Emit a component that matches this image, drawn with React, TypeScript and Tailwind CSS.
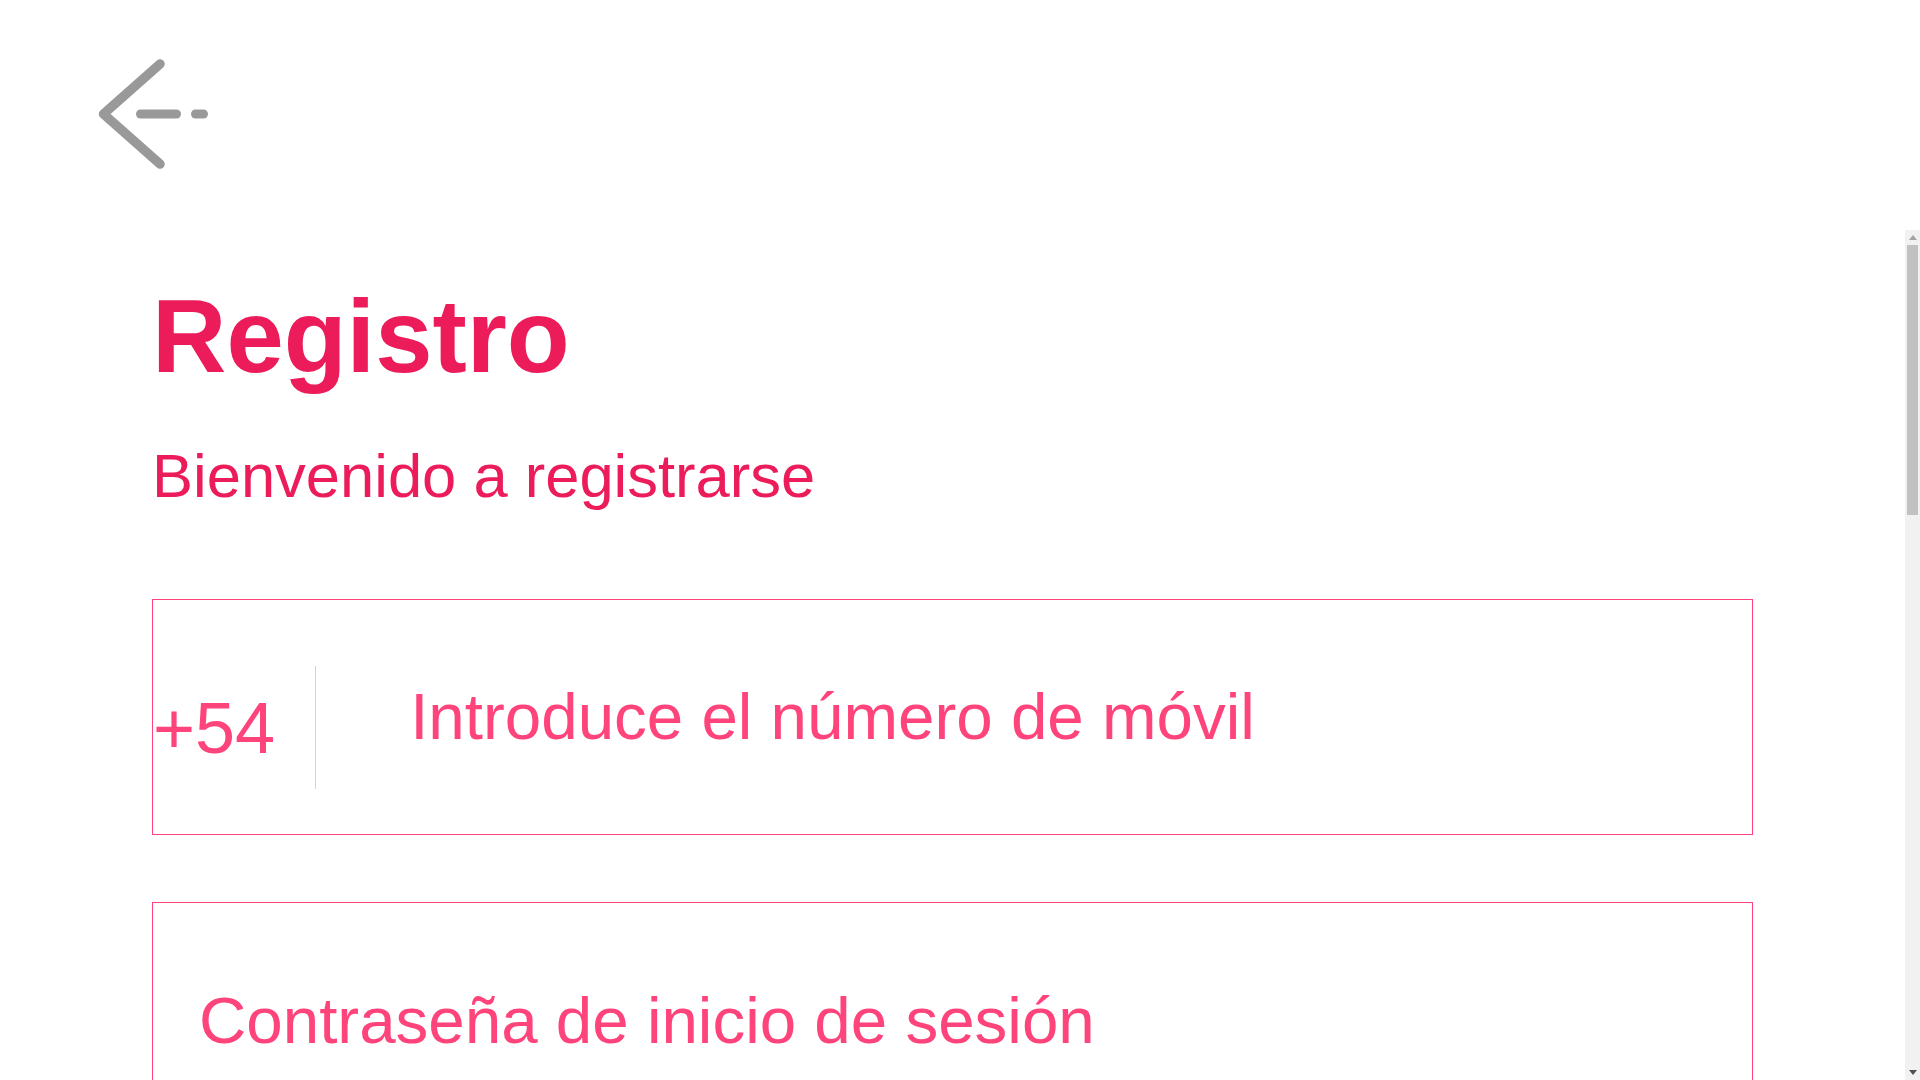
import React from "react";

export default function App() {
  return (
    <div
      className="h-screen w-full flex flex-col bg-white overflow-hidden"
      style={{ fontFamily: '"Liberation Sans", Arial, sans-serif' }}
    >
      <header className="h-[230px] shrink-0 pl-[90px] pt-[50px]">
        <button className="block w-[130px] h-[130px]" aria-label="Volver">
          <svg width="130" height="130" viewBox="0 0 130 130" fill="none">
            <polyline
              points="70,14 13.5,64 70,114"
              stroke="#999999"
              strokeWidth="9.5"
              strokeLinecap="round"
              strokeLinejoin="round"
            />
            <line x1="50.5" y1="64" x2="86.5" y2="64" stroke="#999999" strokeWidth="9" strokeLinecap="round" />
            <line x1="105.5" y1="64" x2="113.5" y2="64" stroke="#999999" strokeWidth="9" strokeLinecap="round" />
          </svg>
        </button>
      </header>
      <div className="flex-1 min-h-0 flex">
        <main className="flex-1 min-w-0 overflow-hidden">
          <div className="px-[152px] pt-[56px]">
            <h1 className="text-[103px] leading-[102px] font-bold text-[#ec1c5a]">Registro</h1>
            <p className="mt-[57px] text-[61.5px] leading-[61px] text-[#ec1c5a]">Bienvenido a registrarse</p>
            <div className="mt-[93px] h-[236px] border border-[#ff437b] flex items-start">
              <span className="mt-[92px] text-[72px] leading-[72px] text-[#ff437b] shrink-0">+54</span>
              <div className="ml-[40px] mt-[66px] w-px h-[123px] bg-[#d4d4d4] shrink-0" />
              <input
                type="tel"
                className="self-stretch flex-1 min-w-0 pl-[94px] text-[65.5px] text-[#ff437b] placeholder:text-[#ff437b] outline-none bg-transparent"
                placeholder="Introduce el número de móvil"
              />
            </div>
            <div className="mt-[67px] h-[236px] border border-[#ff437b] flex">
              <input
                type="password"
                className="w-full h-full pl-[46px] text-[65.5px] text-[#ff437b] placeholder:text-[#ff437b] outline-none bg-transparent"
                placeholder="Contraseña de inicio de sesión"
              />
            </div>
          </div>
        </main>
        <div className="w-[15px] shrink-0 bg-[#f1f1f1] flex flex-col">
          <div className="h-[15px] flex items-center justify-center">
            <svg width="8" height="5" viewBox="0 0 8 5">
              <polygon points="0,5 4,0 8,5" fill="#a3a3a3" />
            </svg>
          </div>
          <div className="px-[2px]">
            <div className="h-[270px] bg-[#c1c1c1]" />
          </div>
          <div className="flex-1" />
          <div className="h-[15px] flex items-center justify-center">
            <svg width="8" height="5" viewBox="0 0 8 5">
              <polygon points="0,0 8,0 4,5" fill="#505050" />
            </svg>
          </div>
        </div>
      </div>
    </div>
  );
}
